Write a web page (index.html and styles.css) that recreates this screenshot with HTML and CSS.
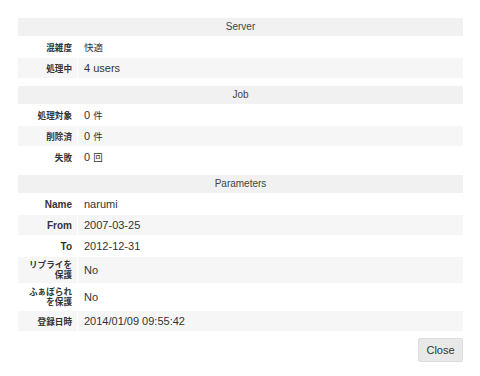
FILE: index.html
```html
<!DOCTYPE html>
<html lang="ja">
<head>
<meta charset="utf-8">
<link rel="stylesheet" href="styles.css">
</head>
<body>
<div class="modal">
  <table class="info">
    <thead><tr><th colspan="2">Server</th></tr></thead>
    <tbody>
      <tr><td class="label"><span class="jp">混雑度</span></td><td class="value"><span class="jp">快適</span></td></tr>
      <tr><td class="label"><span class="jp">処理中</span></td><td class="value">4 users</td></tr>
    </tbody>
  </table>
  <table class="info">
    <thead><tr><th colspan="2">Job</th></tr></thead>
    <tbody>
      <tr><td class="label"><span class="jp">処理対象</span></td><td class="value">0 <span class="jp">件</span></td></tr>
      <tr><td class="label"><span class="jp">削除済</span></td><td class="value">0 <span class="jp">件</span></td></tr>
      <tr><td class="label"><span class="jp">失敗</span></td><td class="value">0 <span class="jp">回</span></td></tr>
    </tbody>
  </table>
  <table class="info">
    <thead><tr><th colspan="2">Parameters</th></tr></thead>
    <tbody>
      <tr><td class="label">Name</td><td class="value">narumi</td></tr>
      <tr><td class="label">From</td><td class="value">2007-03-25</td></tr>
      <tr><td class="label">To</td><td class="value">2012-12-31</td></tr>
      <tr><td class="label two"><span class="jp">リプライを<br>保護</span></td><td class="value">No</td></tr>
      <tr><td class="label two"><span class="jp">ふぁぼられ<br>を保護</span></td><td class="value">No</td></tr>
      <tr><td class="label"><span class="jp">登録日時</span></td><td class="value">2014/01/09 09:55:42</td></tr>
    </tbody>
  </table>
  <div class="footer">
    <button class="btn">Close</button>
  </div>
</div>
</body>
</html>
```
FILE: styles.css
```css
html, body {
  margin: 0;
  padding: 0;
  background: #fff;
}
body {
  font-family: "Liberation Sans", "Noto Sans CJK JP", sans-serif;
  color: #333;
}
.modal {
  padding: 18px 17px 0 18px;
}
.info {
  width: 100%;
  border-collapse: separate;
  border-spacing: 0;
  margin-bottom: 8px;
}
.info th {
  background: #f1f1f1;
  font-size: 10px;
  line-height: 12px;
  font-weight: normal;
  color: #444;
  padding: 3px 0;
  text-align: center;
}
.info td {
  border-top: 1px solid #fff;
  padding: 4px 6px 3px;
  height: 13px;
  font-size: 11px;
  line-height: 13px;
  vertical-align: middle;
}
.info tbody tr:nth-child(even) td {
  background: #f6f6f6;
}
.info td.label {
  width: 48px;
  padding-left: 6px;
  padding-right: 5px;
  border-right: 1px solid #fff;
  text-align: right;
  font-weight: bold;
  font-size: 10px;
  color: #333;
}
.info td.label.two {
  line-height: 9.5px;
}
.info td.value {
  color: #333;
}
.jp {
  font-size: 0.86em;
  line-height: 8px;
}
.two .jp {
  display: inline-block;
  line-height: 9.5px;
  vertical-align: middle;
}
.footer {
  display: flex;
  justify-content: flex-end;
  margin-top: -1px;
}
.btn {
  width: 45px;
  height: 24px;
  padding: 0;
  font-family: "Liberation Sans", sans-serif;
  font-size: 11px;
  color: #333;
  background: #e8e8e8;
  border: 1px solid #dcdcdc;
  border-radius: 2px;
}
```
